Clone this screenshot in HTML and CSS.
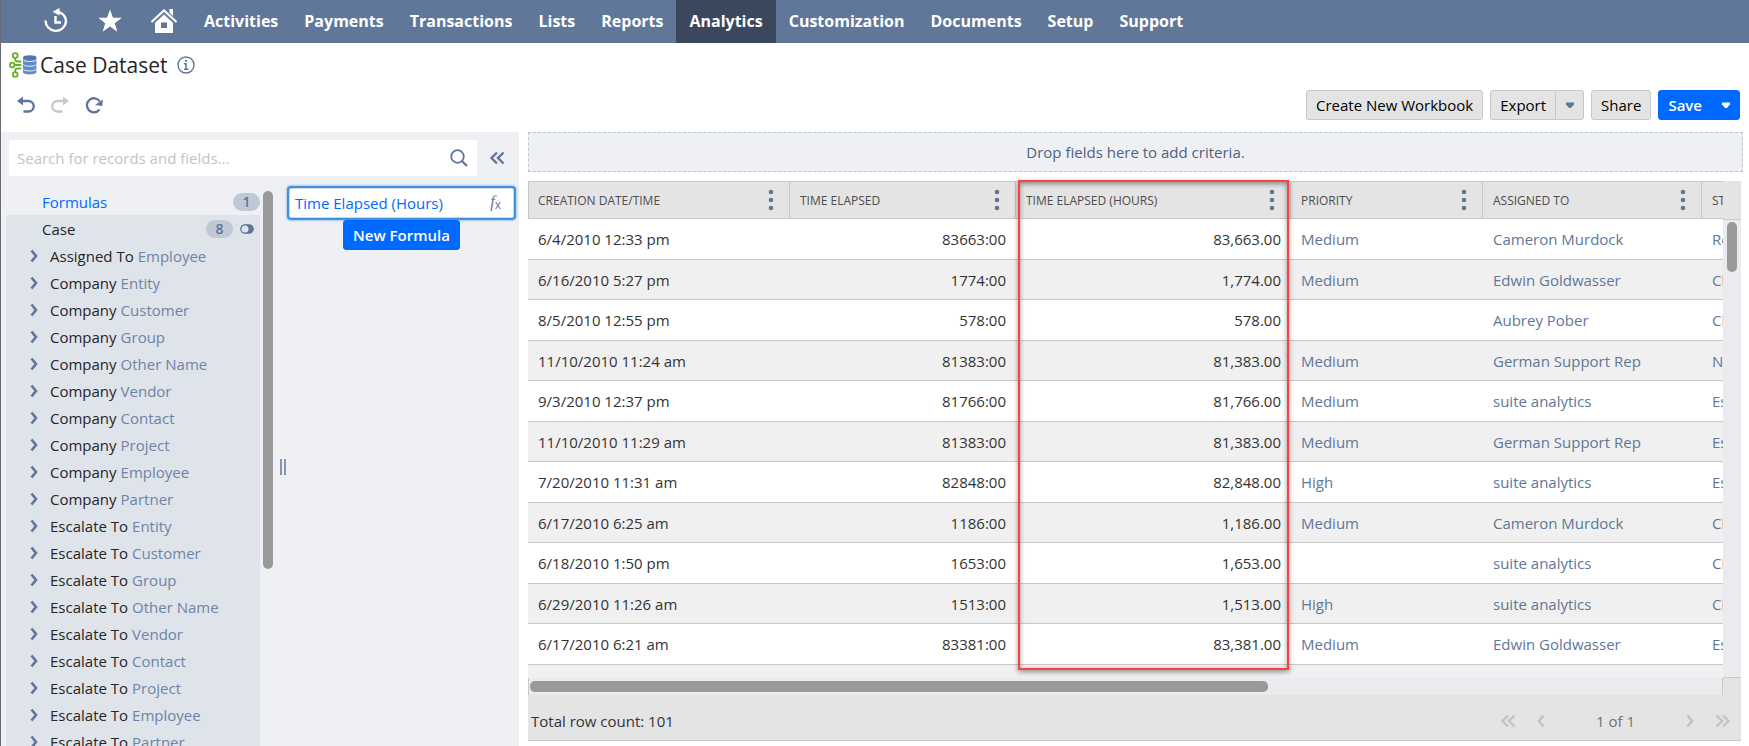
FILE: index.html
```html
<!DOCTYPE html>
<html lang="en">
<head>
  <meta charset="UTF-8">
  <meta name="viewport" content="width=device-width, initial-scale=1.0">
  <title>Case Dataset</title>
  <link rel="stylesheet" href="styles.css">
</head>
<body>

  <!-- icons used more than once -->
  <svg class="sprite" aria-hidden="true">
    <symbol id="chevron" viewBox="0 0 8 14"><path d="M1.5 1.5 6 7l-4.500 5.500" fill="none" stroke="currentColor" stroke-width="2.600"/></symbol>
    <symbol id="double" viewBox="0 0 16 14"><path d="M8 1.500 2.500 7 8 12.500M14.500 1.500 9 7l5.500 5.500" fill="none" stroke="currentColor" stroke-width="2.400"/></symbol>
    <symbol id="dots" viewBox="0 0 6 22"><g fill="currentColor"><circle cx="3" cy="3" r="2.300"/><circle cx="3" cy="11" r="2.300"/><circle cx="3" cy="19" r="2.300"/></g></symbol>
    <symbol id="caret" viewBox="0 0 10 7"><path d="M1 .5h8v2L5.800 6H4.200L1 2.500z" fill="currentColor"/></symbol>
  </svg>

  <!-- top navigation -->
  <nav class="topbar">
    <a href="#" class="nav-icon" aria-label="Recent">
      <svg width="26" height="26" viewBox="0 0 26 26" fill="none" stroke="#fff"><path d="M2.500 12.500A10.300 10.300 0 0 0 23 14c0-5.500-3.500-9.500-9-10.300" stroke-width="2.400"/><path d="M16.500 0v7.600L9.500 3.800z" fill="#fff" stroke="none"/><path d="M12.500 8v6.500H18" stroke-width="2.400"/></svg>
    </a>
    <a href="#" class="nav-icon" aria-label="Shortcuts">
      <svg width="26" height="26" viewBox="0 0 26 26"><path d="m13 1.500 3 8.300h8.800l-7 5.400 2.600 8.600-7.400-5.200-7.400 5.200 2.600-8.600-7-5.400H10z" fill="#fff"/></svg>
    </a>
    <a href="#" class="nav-icon" aria-label="Home">
      <svg width="28" height="26" viewBox="0 0 28 26"><path d="M1.500 14 14 2.500 26.500 14" fill="none" stroke="#fff" stroke-width="2.200"/><path d="M19.500 1H23v7l-3.500-3.200z" fill="#fff"/><path d="M14 6.500 5 14.700V25h18V14.700zM11 14.500h6v5.500h-6z" fill="#fff" fill-rule="evenodd"/></svg>
    </a>
    <a href="#" class="nav-link">Activities</a>
    <a href="#" class="nav-link">Payments</a>
    <a href="#" class="nav-link">Transactions</a>
    <a href="#" class="nav-link">Lists</a>
    <a href="#" class="nav-link">Reports</a>
    <a href="#" class="nav-link active" aria-current="page">Analytics</a>
    <a href="#" class="nav-link">Customization</a>
    <a href="#" class="nav-link">Documents</a>
    <a href="#" class="nav-link">Setup</a>
    <a href="#" class="nav-link">Support</a>
  </nav>

  <header class="title-row">
    <svg width="28" height="26" viewBox="0 0 28 26" aria-hidden="true">
      <g fill="none" stroke="#6ab023" stroke-width="1.800"><circle cx="6.200" cy="3.500" r="2.400"/><circle cx="3.200" cy="13" r="2.300"/><circle cx="6.200" cy="22.500" r="2.400"/><path d="M6.200 6v1.200c0 1.500 1 2.300 2.500 2.300h3.600M5.800 13h6.500M6.200 20v-1.200c0-1.500 1-2.300 2.500-2.300h3.600"/></g>
      <path d="M14 5.500v14.600c0 1.500 3 2.400 6.700 2.400s6.700-.9 6.700-2.400V5.500z" fill="#5f8cc7"/>
      <ellipse cx="20.700" cy="5.500" rx="6.700" ry="2.300" fill="#5174ad"/>
      <path d="M14 7.500c1 1.700 3.500 2 6.700 2s5.700-.3 6.700-2M14 12.200c1 1.700 3.500 2 6.700 2s5.700-.3 6.700-2M14 16.900c1 1.700 3.500 2 6.700 2s5.700-.3 6.700-2" fill="none" stroke="#e8eef6"/>
    </svg>
    <h1>Case Dataset</h1>
    <button class="icon-btn info" aria-label="Dataset details">
      <svg width="18" height="18" viewBox="0 0 18 18" fill="none" stroke="#5f7599"><circle cx="9" cy="9" r="8" stroke-width="1.400"/><path d="M7 7.700h2v5M7 13.200h4.500" stroke-width="1.600"/><circle cx="9" cy="4.800" r="1.100" fill="#5f7599" stroke="none"/></svg>
    </button>
  </header>

  <div class="toolbar">
    <div class="history">
      <button class="icon-btn" aria-label="Undo">
        <svg width="18" height="18" viewBox="0 0 18 18"><path d="M5 5h6.500a5 5 0 0 1 0 10.500H6.500" fill="none" stroke="#5f7599" stroke-width="2.300"/><path d="M0 5l6-4.500v9z" fill="#5f7599"/></svg>
      </button>
      <button class="icon-btn" aria-label="Redo" disabled>
        <svg width="18" height="18" viewBox="0 0 18 18"><path d="M13 5H6.500a5 5 0 0 0 0 10.500h5" fill="none" stroke="#c8c8c8" stroke-width="2.300"/><path d="M18 5 12 .5v9z" fill="#c8c8c8"/></svg>
      </button>
      <button class="icon-btn" aria-label="Refresh">
        <svg width="18" height="18" viewBox="0 0 18 18"><path d="M14.500 13.500A7 7 0 1 1 14.800 5.500" fill="none" stroke="#5f7599" stroke-width="2.300"/><path d="M18 3.500l-.8 6.500L10 9z" fill="#5f7599"/></svg>
      </button>
    </div>
    <div class="actions">
      <button class="btn">Create New Workbook</button>
      <div class="split">
        <button class="btn">Export</button>
        <button class="btn btn-caret" aria-label="Export options"><svg width="10" height="7"><use href="#caret"/></svg></button>
      </div>
      <button class="btn">Share</button>
      <div class="split primary">
        <button class="btn">Save</button>
        <button class="btn btn-caret" aria-label="Save options"><svg width="10" height="7"><use href="#caret"/></svg></button>
      </div>
    </div>
  </div>

  <main class="workspace">

    <!-- records and fields -->
    <aside class="sidebar">
      <div class="search-row">
        <div class="search">
          <input type="text" id="search" aria-label="Search for records and fields" placeholder="Search for records and fields...">
          <button class="icon-btn" aria-label="Search"><svg width="18" height="18" viewBox="0 0 18 18" fill="none" stroke="#5f7599"><circle cx="7.500" cy="7.500" r="6.300" stroke-width="1.800"/><path d="m12 12 5 5" stroke-width="2.200"/></svg></button>
        </div>
        <button class="icon-btn collapse" aria-label="Collapse panel"><svg width="16" height="14"><use href="#double"/></svg></button>
      </div>

      <div class="panes">
        <div class="records">
          <div class="record selected"><span>Formulas</span><span class="badge">1</span></div>
          <div class="record-group">
            <div class="record"><span>Case</span><span class="badge">8</span>
              <svg class="toggle" width="14" height="10" viewBox="0 0 14 10"><rect x=".8" y=".8" width="12.400" height="8.400" rx="4.200" fill="#5f7599" stroke="#5f7599" stroke-width="1.200"/><circle cx="5" cy="5" r="3.500" fill="#dfe3ea"/></svg>
            </div>
            <ul class="joins">
              <li><svg width="8" height="14"><use href="#chevron"/></svg>Assigned To <em>Employee</em></li>
              <li><svg width="8" height="14"><use href="#chevron"/></svg>Company <em>Entity</em></li>
              <li><svg width="8" height="14"><use href="#chevron"/></svg>Company <em>Customer</em></li>
              <li><svg width="8" height="14"><use href="#chevron"/></svg>Company <em>Group</em></li>
              <li><svg width="8" height="14"><use href="#chevron"/></svg>Company <em>Other Name</em></li>
              <li><svg width="8" height="14"><use href="#chevron"/></svg>Company <em>Vendor</em></li>
              <li><svg width="8" height="14"><use href="#chevron"/></svg>Company <em>Contact</em></li>
              <li><svg width="8" height="14"><use href="#chevron"/></svg>Company <em>Project</em></li>
              <li><svg width="8" height="14"><use href="#chevron"/></svg>Company <em>Employee</em></li>
              <li><svg width="8" height="14"><use href="#chevron"/></svg>Company <em>Partner</em></li>
              <li><svg width="8" height="14"><use href="#chevron"/></svg>Escalate To <em>Entity</em></li>
              <li><svg width="8" height="14"><use href="#chevron"/></svg>Escalate To <em>Customer</em></li>
              <li><svg width="8" height="14"><use href="#chevron"/></svg>Escalate To <em>Group</em></li>
              <li><svg width="8" height="14"><use href="#chevron"/></svg>Escalate To <em>Other Name</em></li>
              <li><svg width="8" height="14"><use href="#chevron"/></svg>Escalate To <em>Vendor</em></li>
              <li><svg width="8" height="14"><use href="#chevron"/></svg>Escalate To <em>Contact</em></li>
              <li><svg width="8" height="14"><use href="#chevron"/></svg>Escalate To <em>Project</em></li>
              <li><svg width="8" height="14"><use href="#chevron"/></svg>Escalate To <em>Employee</em></li>
              <li><svg width="8" height="14"><use href="#chevron"/></svg>Escalate To <em>Partner</em></li>
            </ul>
          </div>
        </div>
        <div class="scroll-y"><div class="thumb"></div></div>
        <div class="splitter"><div class="grip"></div></div>
        <div class="fields">
          <button class="field"><span>Time Elapsed (Hours)</span><span class="fx"><i>f</i><b>x</b></span></button>
          <button class="btn new-formula">New Formula</button>
        </div>
      </div>
    </aside>

    <!-- dataset grid -->
    <section class="content">
      <div class="criteria">Drop fields here to add criteria.</div>

      <div class="grid">
        <div class="grid-view">
          <table>
            <colgroup><col class="c-date"><col class="c-elapsed"><col class="c-hours"><col class="c-priority"><col class="c-assigned"><col class="c-status"></colgroup>
            <thead>
              <tr>
                <th><div class="head">Creation Date/Time<button class="icon-btn" aria-label="Creation date menu"><svg width="6" height="22"><use href="#dots"/></svg></button></div></th>
                <th><div class="head">Time Elapsed<button class="icon-btn" aria-label="Time elapsed menu"><svg width="6" height="22"><use href="#dots"/></svg></button></div></th>
                <th><div class="head">Time Elapsed (Hours)<button class="icon-btn" aria-label="Hours menu"><svg width="6" height="22"><use href="#dots"/></svg></button></div></th>
                <th><div class="head">Priority<button class="icon-btn" aria-label="Priority menu"><svg width="6" height="22"><use href="#dots"/></svg></button></div></th>
                <th><div class="head">Assigned To<button class="icon-btn" aria-label="Assigned to menu"><svg width="6" height="22"><use href="#dots"/></svg></button></div></th>
                <th><div class="head">Status</div></th>
              </tr>
            </thead>
            <tbody>
              <tr><td>6/4/2010 12:33 pm</td><td class="num">83663:00</td><td class="num">83,663.00</td><td class="ref">Medium</td><td class="ref">Cameron Murdock</td><td class="ref">Re-Opened</td></tr>
              <tr><td>6/16/2010 5:27 pm</td><td class="num">1774:00</td><td class="num">1,774.00</td><td class="ref">Medium</td><td class="ref">Edwin Goldwasser</td><td class="ref">Closed</td></tr>
              <tr><td>8/5/2010 12:55 pm</td><td class="num">578:00</td><td class="num">578.00</td><td class="ref"></td><td class="ref">Aubrey Pober</td><td class="ref">Closed</td></tr>
              <tr><td>11/10/2010 11:24 am</td><td class="num">81383:00</td><td class="num">81,383.00</td><td class="ref">Medium</td><td class="ref">German Support Rep</td><td class="ref">Not Started</td></tr>
              <tr><td>9/3/2010 12:37 pm</td><td class="num">81766:00</td><td class="num">81,766.00</td><td class="ref">Medium</td><td class="ref">suite analytics</td><td class="ref">Escalated</td></tr>
              <tr><td>11/10/2010 11:29 am</td><td class="num">81383:00</td><td class="num">81,383.00</td><td class="ref">Medium</td><td class="ref">German Support Rep</td><td class="ref">Escalated</td></tr>
              <tr><td>7/20/2010 11:31 am</td><td class="num">82848:00</td><td class="num">82,848.00</td><td class="ref">High</td><td class="ref">suite analytics</td><td class="ref">Escalated</td></tr>
              <tr><td>6/17/2010 6:25 am</td><td class="num">1186:00</td><td class="num">1,186.00</td><td class="ref">Medium</td><td class="ref">Cameron Murdock</td><td class="ref">Closed</td></tr>
              <tr><td>6/18/2010 1:50 pm</td><td class="num">1653:00</td><td class="num">1,653.00</td><td class="ref"></td><td class="ref">suite analytics</td><td class="ref">Closed</td></tr>
              <tr><td>6/29/2010 11:26 am</td><td class="num">1513:00</td><td class="num">1,513.00</td><td class="ref">High</td><td class="ref">suite analytics</td><td class="ref">Closed</td></tr>
              <tr><td>6/17/2010 6:21 am</td><td class="num">83381:00</td><td class="num">83,381.00</td><td class="ref">Medium</td><td class="ref">Edwin Goldwasser</td><td class="ref">Escalated</td></tr>
              <tr><td></td><td></td><td></td><td></td><td></td><td></td></tr>
            </tbody>
          </table>
        </div>
        <div class="grid-scroll-y"><div class="thumb"></div></div>
        <div class="grid-scroll-x"><div class="thumb"></div></div>
        <div class="corner"></div>
        <div class="highlight"></div>
      </div>

      <footer class="grid-footer">
        <span>Total row count: 101</span>
        <div class="pager">
          <button class="icon-btn" aria-label="First page" disabled><svg width="16" height="14"><use href="#double"/></svg></button>
          <button class="icon-btn flip" aria-label="Previous page" disabled><svg width="8" height="14"><use href="#chevron"/></svg></button>
          <span class="page">1 of 1</span>
          <button class="icon-btn" aria-label="Next page" disabled><svg width="8" height="14"><use href="#chevron"/></svg></button>
          <button class="icon-btn flip" aria-label="Last page" disabled><svg width="16" height="14"><use href="#double"/></svg></button>
        </div>
      </footer>
    </section>
  </main>

</body>
</html>
```

FILE: styles.css
```css
* { box-sizing: border-box; }
body {
  display: flex;
  flex-direction: column;
  height: 100vh;
  margin: 0;
  overflow: hidden;
  border-left: 1px solid #6c6c70;
  background-color: #fff;
  color: #333;
  font-family: "Open Sans", "Noto Sans", sans-serif;
  font-size: 15px;
}
button { font: inherit; cursor: pointer; }
svg { display: block; flex: none; }
.sprite { position: absolute; width: 0; height: 0; }
.icon-btn {
  display: flex;
  padding: 0;
  border: none;
  background: none;
  color: #5f7599;
}

/* top navigation */
.topbar {
  display: flex;
  flex: none;
  height: 43px;
  padding-left: 28px;
  background-color: #607799;
}
.nav-icon {
  display: flex;
  align-items: center;
  justify-content: center;
  width: 54px;
  padding-bottom: 2px;
}
.nav-link {
  display: flex;
  align-items: center;
  padding: 0 13px 2px;
  color: #fff;
  font-size: 16px;
  font-weight: 700;
  text-decoration: none;
}
.nav-link.active { background-color: #3b475d; }

/* title and toolbar */
.title-row {
  display: flex;
  align-items: center;
  height: 44px;
  padding: 0 0 1px 8px;
}
h1 {
  margin: 0 0 0 3px;
  color: #262626;
  font-size: 21px;
  font-weight: 400;
}
.info { margin-left: 9px; }
.toolbar {
  display: flex;
  align-items: center;
  justify-content: space-between;
  height: 36px;
  margin-bottom: 9px;
  padding: 0 9px 0 16px;
}
.history { display: flex; gap: 16px; }
.actions { display: flex; gap: 7px; }
.btn {
  height: 30px;
  padding: 0 9px;
  border: 1px solid #c8c8c8;
  border-radius: 3px;
  background-color: #e4e4e4;
  color: #000;
  font-weight: 500;
  line-height: 20px;
}
.split { display: flex; }
.split .btn:first-child {
  border-top-right-radius: 0;
  border-bottom-right-radius: 0;
}
.split .btn-caret {
  width: 29px;
  margin-left: -1px;
  border-top-left-radius: 0;
  border-bottom-left-radius: 0;
  color: #5f7599;
}
.primary .btn,
.new-formula {
  border-color: #006aff;
  background-color: #006aff;
  color: #fff;
  font-weight: 600;
}
.primary .btn-caret { color: #fff; }

/* sidebar */
.workspace {
  display: flex;
  flex: 1;
  min-height: 0;
}
.sidebar {
  display: flex;
  flex-direction: column;
  flex: none;
  width: 518px;
  padding: 8px 0 0 5px;
  background-color: #eff0f4;
}
.search-row {
  display: flex;
  align-items: center;
  margin-left: 3px;
}
.search {
  display: flex;
  align-items: center;
  width: 468px;
  height: 36px;
  padding: 0 9px 0 8px;
  background-color: #fff;
}
.search input {
  flex: 1;
  min-width: 0;
  padding: 0;
  border: none;
  outline: none;
  background: none;
  font: inherit;
  font-weight: 500;
}
.search input::placeholder { color: #c3c3c3; opacity: 1; }
.collapse { margin-left: 12px; }
.panes {
  display: flex;
  flex: 1;
  min-height: 0;
}
.records {
  width: 254px;
  padding-top: 12px;
  overflow: hidden;
}
.record {
  display: flex;
  align-items: center;
  height: 27px;
  padding-left: 36px;
  color: #262626;
}
.record.selected { color: #006aff; font-weight: 500; }
.record span:first-child { flex: 1; }
.badge {
  width: 27px;
  height: 18px;
  border-radius: 9px;
  background-color: #bfc9d6;
  color: #5f7599;
  font-size: 14px;
  font-weight: 600;
  line-height: 18px;
  text-align: center;
}
.toggle { margin: 0 6px 0 7px; }
.record-group { background-color: #dfe3ea; }
.joins {
  margin: 0;
  padding: 0;
  list-style: none;
}
.joins li {
  display: flex;
  align-items: center;
  gap: 4px;
  height: 27px;
  padding-left: 24px;
  color: #262626;
  white-space: nowrap;
}
.joins svg { margin-right: 8px; color: #5f7599; }
.joins em { color: #6d84a8; font-style: normal; }
.thumb { border-radius: 5px; background-color: #999; }
.scroll-y { padding: 15px 0 0 3px; }
.scroll-y .thumb { width: 10px; height: 378px; }
.splitter {
  display: flex;
  align-items: center;
  justify-content: center;
  width: 16px;
  padding: 12px 0 0 4px;
}
.grip {
  width: 6px;
  height: 16px;
  border: solid #8496b3;
  border-width: 0 2px;
}
.fields {
  display: flex;
  flex-direction: column;
  align-items: center;
  gap: 2px;
  width: 225px;
  padding-top: 12px;
}
.field {
  display: flex;
  align-items: center;
  justify-content: space-between;
  width: 100%;
  height: 30px;
  padding: 0 12px 0 5px;
  border: 1px solid #d0d4dc;
  border-radius: 2px;
  background-color: #fff;
  box-shadow: 0 0 0 2px #3f91e0, 0 0 2px 3px #a9cdf0;
  color: #006aff;
  font-weight: 500;
}
.fx {
  display: flex;
  color: #5f7599;
  font-family: "Liberation Serif", serif;
  font-size: 16px;
  line-height: 16px;
}
.fx b {
  padding-top: 3px;
  font-family: "Open Sans", sans-serif;
  font-size: 12px;
  font-weight: 500;
}

/* grid */
.content {
  flex: 1;
  min-width: 0;
  display: flex;
  flex-direction: column;
  padding: 0 8px 5px 9px;
}
.criteria {
  display: flex;
  align-items: center;
  justify-content: center;
  flex: none;
  height: 40px;
  margin: 0 -2px 9px 0;
  border: 1px dashed #bcc6d6;
  background-color: #eff0f4;
  color: #4f6180;
  font-weight: 500;
}
.grid {
  position: relative;
  display: grid;
  grid-template-columns: minmax(0, 1fr) 18px;
  grid-template-rows: minmax(0, 1fr) 17px;
  flex: 1;
  min-height: 0;
}
.grid-view { overflow: hidden; }
table {
  width: 1324px;
  border-collapse: separate;
  border-spacing: 0;
  table-layout: fixed;
}
.c-date { width: 262px; }
.c-elapsed { width: 226px; }
.c-hours { width: 275px; }
.c-priority { width: 192px; }
.c-assigned { width: 219px; }
.c-status { width: 150px; }
th {
  height: 38px;
  padding: 0 15px 0 10px;
  border: solid #c8c8c8;
  border-width: 1px 1px 1px 0;
  background-color: #e4e4e4;
  color: #4d4d4d;
  font-size: 12px;
  font-weight: 400;
  text-transform: uppercase;
}
th:first-child { padding-left: 9px; border-left-width: 1px; }
.head {
  display: flex;
  align-items: center;
  justify-content: space-between;
}
td {
  height: 41px;
  padding: 0 10px;
  border-bottom: 1px solid #c8c8c8;
}
tr:nth-child(even) td { height: 40px; background-color: #f0f0f0; }
.num { text-align: right; }
.ref { color: #607799; }
.grid-scroll-y {
  margin-top: 38px;
  padding: 2px 4px 0;
  border: solid #c8c8c8;
  border-width: 1px 0;
  background-color: #eaebef;
  box-shadow: 0 -38px #e4e4e4;
}
.grid-scroll-y .thumb { height: 50px; }
.grid-scroll-x {
  padding: 3px 1px;
  border: solid #c8c8c8;
  border-width: 0 1px;
  background-color: #eaebef;
}
.grid-scroll-x .thumb { width: 62%; height: 11px; }
.corner { background-color: #e4e4e4; }
/* frame around the calculated column */
.highlight {
  position: absolute;
  top: -1px;
  bottom: 25px;
  left: 490px;
  width: 271px;
  border: 2px solid #ff4040;
  box-shadow: 0 2px 5px rgba(0, 0, 0, 0.4), inset 0 2px 5px rgba(0, 0, 0, 0.4);
  pointer-events: none;
}
.grid-footer {
  display: flex;
  align-items: center;
  justify-content: space-between;
  height: 46px;
  padding: 6px 10px 0 3px;
  border-bottom: 1px solid #c8c8c8;
  background-color: #e4e4e4;
}
.pager {
  display: flex;
  align-items: center;
  gap: 21px;
}
.pager .icon-btn { color: #c3c3c3; }
.page { padding: 0 30px; color: #737373; }
.flip { transform: scaleX(-1); }
```
